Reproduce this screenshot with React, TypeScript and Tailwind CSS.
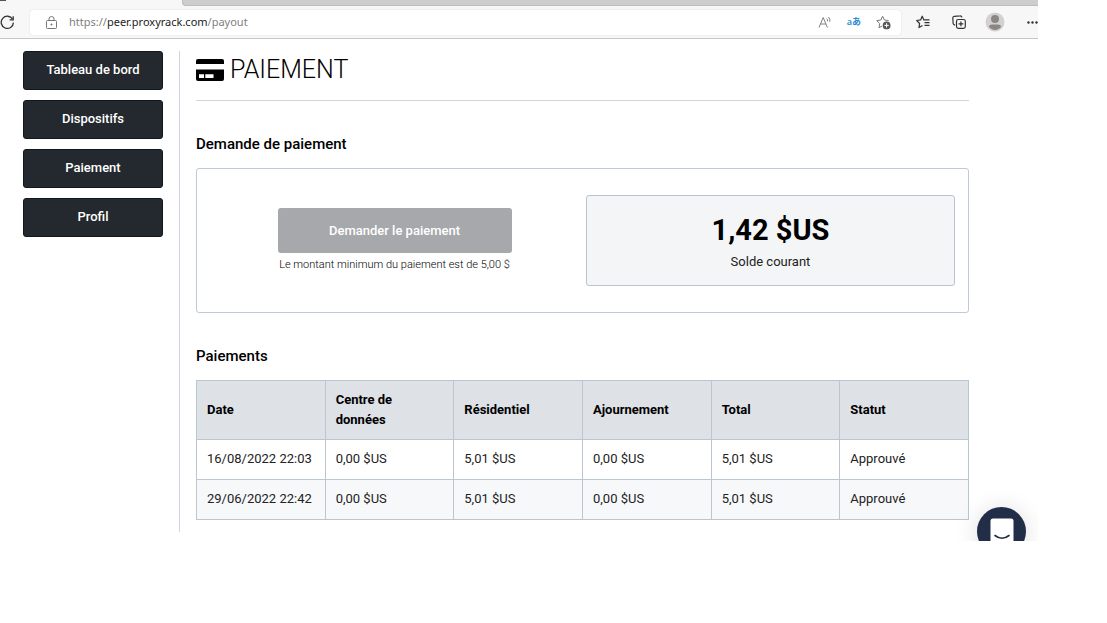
import type { ReactNode } from 'react';

interface Payment {
  date: string;
  datacenter: string;
  residential: string;
  deferral: string;
  total: string;
  status: string;
}

const navItems = ['Tableau de bord', 'Dispositifs', 'Paiement', 'Profil'];

const columns = ['Date', 'Centre de données', 'Résidentiel', 'Ajournement', 'Total', 'Statut'];

const payments: Payment[] = [
  {
    date: '16/08/2022 22:03',
    datacenter: '0,00 $US',
    residential: '5,01 $US',
    deferral: '0,00 $US',
    total: '5,01 $US',
    status: 'Approuvé',
  },
  {
    date: '29/06/2022 22:42',
    datacenter: '0,00 $US',
    residential: '5,01 $US',
    deferral: '0,00 $US',
    total: '5,01 $US',
    status: 'Approuvé',
  },
];

const IconButton = ({ label, children }: { label: string; children: ReactNode }) => (
  <button type="button" aria-label={label} className="flex h-5 w-5 shrink-0 items-center justify-center">
    {children}
  </button>
);

const BrowserBar = () => (
  <header className="border-b border-[#c6c6c6] bg-[#f7f7f7]">
    <div className="flex h-1.5">
      <div className="w-[182px] shrink-0">
        <div className="h-px w-1.5 bg-[#555]" />
      </div>
      <div className="flex-1 rounded-bl border-b border-l border-[#bcbcbc] bg-[#cdcdcd]" />
    </div>
    <div className="flex h-8 items-center">
      <button type="button" aria-label="Actualiser" className="w-[30px] shrink-0">
        <svg width="15" height="15" viewBox="0 0 15 15" fill="none" stroke="#333" strokeWidth="1.3">
          <path d="M12.6 4.3A6.1 6.1 0 1 0 13.4 7.6" />
          <path d="M13.2 1.2V4.8H9.6" />
        </svg>
      </button>
      <div className="flex h-[25px] flex-1 items-center rounded bg-white pr-2 pl-4 shadow-[0_0_2px_#ddd]">
        <svg width="11" height="13" viewBox="0 0 11 13" fill="none" stroke="#777" className="shrink-0">
          <rect x="0.5" y="4.5" width="10" height="8" rx="1" />
          <path d="M3 4.5V3a2.5 2.5 0 0 1 5 0v1.5" />
          <circle cx="5.5" cy="8.5" r="0.6" fill="#555" />
        </svg>
        <div className="ml-3 flex-1 font-['Noto_Sans',sans-serif] text-[11px] text-[#808080]">
          https://<span className="text-[#222]">peer.proxyrack.com</span>/payout
        </div>
        <div className="flex gap-[9px]">
          <IconButton label="Lecture à voix haute">
            <svg width="15" height="13" viewBox="0 0 15 13" fill="none" stroke="#808080">
              <path d="M1 11.5L5.2 1.5L9.4 11.5M2.5 8H8" />
              <path d="M8.6 2.6Q10 3.6 9.6 5.4M10.4 1Q12.6 2.8 11.8 5.8" strokeWidth="1" />
            </svg>
          </IconButton>
          <IconButton label="Traduire">
            <span className="font-['Noto_Sans','Noto_Sans_CJK_JP',sans-serif] text-[9px] font-semibold whitespace-nowrap text-[#2f8bd8]">
              aあ
            </span>
          </IconButton>
          <IconButton label="Ajouter aux favoris">
            <svg width="15" height="15" viewBox="0 0 15 15" fill="none" stroke="#777" strokeLinejoin="round">
              <path d="M6 11L3 12.8L3.7 8.6L0.8 5.6L4.8 5L6.6 1.2L8.4 5L12.6 5.6" />
              <circle cx="10.6" cy="10.4" r="3.9" fill="#555" stroke="none" />
              <path d="M10.6 8.2v4.4M8.4 10.4h4.4" stroke="#fff" />
            </svg>
          </IconButton>
        </div>
      </div>
      <div className="flex shrink-0 items-center gap-4 pl-3">
        <IconButton label="Favoris">
          <svg width="14" height="14" viewBox="0 0 14 14" fill="none" stroke="#333" strokeWidth="1.2" strokeLinejoin="round">
            <path d="M6.5 10.6L3 12.6L3.6 8.5L0.7 5.5L4.6 4.9L6.2 1.2L7.9 4.9H13.5M8.5 7.6H13.5M8.5 10.3H13.5" />
          </svg>
        </IconButton>
        <IconButton label="Collections">
          <svg width="14" height="14" viewBox="0 0 14 14" fill="none" stroke="#333" strokeWidth="1.2">
            <rect x="4.5" y="4.5" width="8.8" height="8.8" rx="1.8" />
            <path d="M8.9 6.5v4.8M6.5 8.9h4.8M3 10.2L1.6 9.2a1.5 1.5 0 0 1-.5-1.5L.8 3A1.6 1.6 0 0 1 2.2 1.4L8 .8A1.6 1.6 0 0 1 9.8 2.4" />
          </svg>
        </IconButton>
        <IconButton label="Profil du navigateur">
          <svg width="20" height="20" viewBox="0 0 20 20" className="shrink-0">
            <circle cx="10" cy="10" r="9.5" fill="#d3d1cf" />
            <circle cx="10" cy="7" r="4" fill="#8a8684" />
            <path d="M3.8 14.6Q4.4 12.4 7 12.4H13Q15.6 12.4 16.2 14.6Q14 18 10 18T3.8 14.6Z" fill="#8a8684" />
          </svg>
        </IconButton>
        <button type="button" aria-label="Paramètres" className="ml-1.5 w-[11px]">
          <svg width="11" height="3" viewBox="0 0 11 3" fill="#333">
            <circle cx="1.5" cy="1.5" r="1.2" />
            <circle cx="5.5" cy="1.5" r="1.2" />
            <circle cx="9.5" cy="1.5" r="1.2" />
          </svg>
        </button>
      </div>
    </div>
  </header>
);

const Sidebar = () => (
  <nav className="flex w-[157px] shrink-0 flex-col gap-2.5 border-r border-[#cfd6de] pr-4">
    {navItems.map((item) => (
      <a
        key={item}
        href="#"
        className="flex h-[39px] items-center justify-center rounded-[3px] border border-[#11181d] bg-[#23292e] pb-0.5 text-[13px] font-medium text-white"
      >
        {item}
      </a>
    ))}
  </nav>
);

const PayoutRequest = () => (
  <section>
    <h2 className="mt-8 text-[15px] leading-[22px] font-medium">Demande de paiement</h2>
    <div className="mt-[13px] grid grid-cols-2 gap-[7px] rounded-[3px] border border-[#c0c9d6] px-[13px] py-[26px]">
      <div className="flex flex-col items-center justify-center">
        <button
          type="button"
          disabled
          className="h-[45px] w-[234px] rounded-[3px] bg-[#a7a8ab] text-[13px] font-medium text-white"
        >
          Demander le paiement
        </button>
        <p className="mt-1 text-[11px] leading-4 font-light">Le montant minimum du paiement est de 5,00 $</p>
      </div>
      <div className="rounded-[3px] border border-[#b9c4d0] bg-[#f4f5f7] pt-4 pb-[13px] text-center">
        <div className="text-[29px] leading-9 font-bold">1,42 $US</div>
        <div className="mt-1 text-[13px] leading-5 text-[#222]">Solde courant</div>
      </div>
    </div>
  </section>
);

const PaymentsTable = () => (
  <section>
    <h2 className="mt-8 text-[15px] leading-[22px] font-medium">Paiements</h2>
    <table className="mt-[13px] w-full table-fixed border-collapse text-left text-[13px] leading-5">
      <thead className="bg-[#dee1e6]">
        <tr>
          {columns.map((column) => (
            <th key={column} className="border border-[#bac6d0] px-2.5 py-[9px] font-bold">
              <span className="block max-w-[80px]">{column}</span>
            </th>
          ))}
        </tr>
      </thead>
      <tbody className="text-[#222]">
        {payments.map((payment) => (
          <tr key={payment.date} className="even:bg-[#f6f8fa]">
            {Object.values(payment).map((value, index) => (
              <td key={index} className="border border-[#bac6d0] px-2.5 pt-[9px] pb-2.5 whitespace-nowrap">
                {value}
              </td>
            ))}
          </tr>
        ))}
      </tbody>
    </table>
  </section>
);

const ChatLauncher = () => (
  <button
    type="button"
    aria-label="Ouvrir le chat"
    className="absolute right-3 -bottom-[15px] flex h-[49px] w-[49px] justify-center rounded-full bg-[#222d47] pt-[11px] shadow-[0_2px_24px_rgba(0,0,0,0.14)]"
  >
    <svg width="24" height="28" viewBox="0 0 24 28">
      <path d="M3 0.5H21Q23.5 0.5 23.5 3V28L18 25H3Q0.5 25 0.5 22V3Q0.5 0.5 3 0.5Z" fill="#fff" />
      <path d="M5 17.5Q12 23 19 17.5" fill="none" stroke="#222d47" strokeWidth="1.6" strokeLinecap="round" />
    </svg>
  </button>
);

export default function App() {
  return (
    <div className="relative mr-[69px] overflow-hidden bg-white pb-[9px] font-[Roboto,sans-serif] text-black">
      <BrowserBar />
      <div className="mt-3 flex pr-[69px] pl-[23px]">
        <Sidebar />
        <main className="min-w-0 flex-1 pb-3 pl-4">
          <h1 className="flex h-[50px] items-start gap-1.5 border-b border-[#cfd6de] pt-px text-[25px] leading-9 font-light">
            <svg width="28" height="22" viewBox="0 0 28 22" className="mt-[7px] shrink-0">
              <path d="M2 0H26Q28 0 28 2V5H0V2Q0 0 2 0Z" />
              <path d="M0 10.5H28V20Q28 22 26 22H2Q0 22 0 20Z" />
              <path d="M3 15.3H8V19H3ZM9.3 15.3H17.5V19H9.3Z" fill="#fff" />
            </svg>
            PAIEMENT
          </h1>
          <PayoutRequest />
          <PaymentsTable />
        </main>
      </div>
      <ChatLauncher />
    </div>
  );
}
